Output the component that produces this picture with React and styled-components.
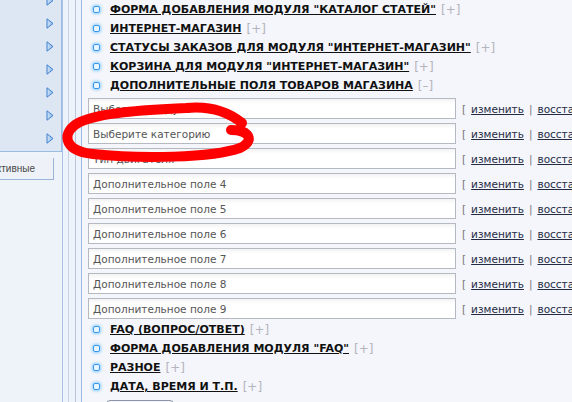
import styled, { createGlobalStyle } from "styled-components";

const GlobalStyle = createGlobalStyle`
  html, body {
    margin: 0;
    padding: 0;
    width: 572px;
    height: 402px;
    overflow: hidden;
    background: #f4f6fb;
    font-family: "DejaVu Sans", Verdana, sans-serif;
  }
`;

const Page = styled.div`
  position: relative;
  display: flex;
  width: 572px;
  height: 402px;
  overflow: hidden;
`;

const Sidebar = styled.div`
  display: flex;
  flex-direction: column;
  width: 62px;
  flex-shrink: 0;
  background: #eef3fa;
`;

const MenuPanel = styled.div`
  display: flex;
  flex-direction: column;
  align-items: flex-end;
  height: 152px;
  box-sizing: border-box;
  padding: 0 7px 0 0;
  background: #dde7f4;
  border-right: 1px solid #9bbbe3;
  border-bottom: 1px solid #9bbbe3;
  overflow: hidden;
`;

const ArrowList = styled.div`
  display: flex;
  flex-direction: column;
  gap: 12px;
  margin-top: -5px;
`;

const Tab = styled.div`
  display: flex;
  justify-content: flex-end;
  align-items: center;
  width: 54px;
  height: 22px;
  margin-top: 6px;
  box-sizing: border-box;
  padding-right: 18px;
  background: #eef2f8;
  border-right: 1px solid #9bb3d6;
  border-bottom: 1px solid #9bb3d6;
  font-family: "Liberation Sans", Arial, sans-serif;
  font-size: 10px;
  color: #4a4a4a;
  white-space: nowrap;
  overflow: hidden;
`;

const Frame = styled.div`
  display: flex;
  width: 20px;
  flex-shrink: 0;
  background: #eef3fb;
`;

const FrameLine = styled.div`
  width: 1px;
  height: 100%;
  margin-left: ${(p) => p.offset}px;
  background: ${(p) => p.color};
`;

const Main = styled.div`
  display: flex;
  flex-direction: column;
  flex: 1;
  padding: 0 0 0 6px;
  background: #f4f6fb;
  min-width: 0;
`;

const Section = styled.div`
  display: flex;
  flex-direction: column;
  padding-left: 5px;
`;

const Row = styled.div`
  display: flex;
  align-items: center;
  height: 19px;
  white-space: nowrap;
`;

const Bullet = styled.span`
  width: 5px;
  height: 5px;
  border: 1px solid #3a98ea;
  border-radius: 2px;
  background: #e9f5ff;
  box-shadow: 0 0 3px 1px #8fcdff;
  margin-right: 10px;
  flex-shrink: 0;
`;

const Title = styled.a`
  font-size: 11px;
  font-weight: bold;
  color: #111;
  text-decoration: underline;
`;

const Toggle = styled.span`
  margin-left: 5px;
  font-size: 12px;
  color: #b4b4bc;
`;

const Fields = styled.div`
  display: flex;
  flex-direction: column;
  gap: 4px;
  margin: 3px 0 1px;
`;

const FieldRow = styled.div`
  display: flex;
  align-items: center;
  white-space: nowrap;
`;

const Input = styled.div`
  display: flex;
  align-items: center;
  width: 368px;
  height: 21px;
  box-sizing: border-box;
  padding: 0 4px;
  flex-shrink: 0;
  background: linear-gradient(#f3f3f3, #ffffff 5px);
  border: 1px solid #b5b9c2;
  font-size: 10.5px;
  color: #555;
`;

const Actions = styled.div`
  display: flex;
  align-items: center;
  margin-left: 6px;
  font-size: 10.5px;
  color: #777;
`;

const ActionLink = styled.a`
  margin: 0 5px 0 5px;
  color: #262b45;
  text-decoration: underline;
`;

const Button = styled.div`
  width: 66px;
  height: 20px;
  margin: 4px 0 0 18px;
  border: 1px solid #8b95a5;
  border-radius: 4px;
  background: #f1f3f7;
  flex-shrink: 0;
`;

const Overlay = styled.svg`
  position: absolute;
  left: 0;
  top: 0;
  pointer-events: none;
`;

const Arrow = () => (
  <svg width="8" height="11" viewBox="0 0 8 11">
    <defs>
      <linearGradient id="ag" x1="0" y1="0" x2="1" y2="0">
        <stop offset="0" stopColor="#cfe3f8" />
        <stop offset="1" stopColor="#8fb7e6" />
      </linearGradient>
    </defs>
    <path d="M1 0.8 L7 5.5 L1 10.2 Z" fill="url(#ag)" stroke="#3f7fcf" strokeWidth="1" strokeLinejoin="round" />
  </svg>
);

const topItems = [
  { title: 'ФОРМА ДОБАВЛЕНИЯ МОДУЛЯ "КАТАЛОГ СТАТЕЙ"', sign: "+" },
  { title: "ИНТЕРНЕТ-МАГАЗИН", sign: "+" },
  { title: 'СТАТУСЫ ЗАКАЗОВ ДЛЯ МОДУЛЯ "ИНТЕРНЕТ-МАГАЗИН"', sign: "+" },
  { title: 'КОРЗИНА ДЛЯ МОДУЛЯ "ИНТЕРНЕТ-МАГАЗИН"', sign: "+" },
  { title: "ДОПОЛНИТЕЛЬНЫЕ ПОЛЯ ТОВАРОВ МАГАЗИНА", sign: "–" },
];

const bottomItems = [
  { title: "FAQ (ВОПРОС/ОТВЕТ)", sign: "+" },
  { title: 'ФОРМА ДОБАВЛЕНИЯ МОДУЛЯ "FAQ"', sign: "+" },
  { title: "РАЗНОЕ", sign: "+" },
  { title: "ДАТА, ВРЕМЯ И Т.П.", sign: "+" },
];

const fields = [
  "Выберите модуль",
  "Выберите категорию",
  "Тип двигателя",
  "Дополнительное поле 4",
  "Дополнительное поле 5",
  "Дополнительное поле 6",
  "Дополнительное поле 7",
  "Дополнительное поле 8",
  "Дополнительное поле 9",
];

const HeadingList = ({ items }) => (
  <Section>
    {items.map((item, i) => (
      <Row key={i}>
        <Bullet />
        <Title>{item.title}</Title>
        <Toggle>[{item.sign}]</Toggle>
      </Row>
    ))}
  </Section>
);

export default function App() {
  return (
    <>
      <GlobalStyle />
      <Page>
        <Sidebar>
          <MenuPanel>
            <ArrowList>
              {Array.from({ length: 7 }).map((_, i) => (
                <Arrow key={i} />
              ))}
            </ArrowList>
          </MenuPanel>
          <Tab>Неактивные</Tab>
        </Sidebar>

        <Frame>
          <FrameLine offset={0} color="#a9c3e6" />
          <FrameLine offset={5} color="#c9d3e2" />
          <FrameLine offset={6} color="#bcc6d6" />
          <FrameLine offset={5} color="#9bbbe3" />
        </Frame>

        <Main>
          <HeadingList items={topItems} />
          <Fields>
            {fields.map((f, i) => (
              <FieldRow key={i}>
                <Input>{f}</Input>
                <Actions>
                  [<ActionLink>изменить</ActionLink>|<ActionLink>восстановить</ActionLink>]
                </Actions>
              </FieldRow>
            ))}
          </Fields>
          <HeadingList items={bottomItems} />
          <Button />
        </Main>

        <Overlay width="572" height="402" viewBox="0 0 572 402">
          <path
            d="M242 123 C 226 110, 206 106, 186 108 C 140 110, 100 113, 80 122 C 61 131, 62 151, 93 154 C 140 159, 212 158, 240 148 C 255 141, 250 130, 231 130"
            fill="none"
            stroke="#ff0000"
            strokeWidth="10"
            strokeLinecap="round"
            strokeLinejoin="round"
          />
        </Overlay>
      </Page>
    </>
  );
}
